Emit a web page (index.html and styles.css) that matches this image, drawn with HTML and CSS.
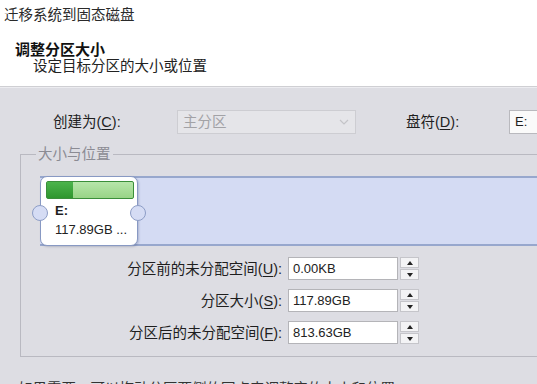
FILE: index.html
```html
<!doctype html>
<html lang="zh-CN">
  <head>
    <meta charset="utf-8">
    <title>迁移系统到固态磁盘</title>
    <link rel="stylesheet" href="styles.css">
  </head>
  <body>
    <header class="head">
      <div class="caption">迁移系统到固态磁盘</div>
      <div class="step-title">调整分区大小</div>
      <div class="step-desc">设定目标分区的大小或位置</div>
    </header>

    <main class="page">
      <div class="type-row">
        <label class="lbl lbl-type">创建为(<u>C</u>):</label>
        <div class="combo combo-off">
          <span>主分区</span>
          <svg class="chev" width="10" height="6" viewBox="0 0 10 6"><polyline points="1,1 5,5 9,1" fill="none" stroke="#c4c4c8" stroke-width="1.2"/></svg>
        </div>
        <label class="lbl lbl-drive">盘符(<u>D</u>):</label>
        <div class="combo combo-drive"><span>E:</span></div>
      </div>

      <fieldset class="group">
        <legend>大小与位置</legend>

        <div class="disk-map">
          <div class="part">
            <div class="usage"><span class="used" style="width:26px"></span></div>
            <div class="part-name">E:</div>
            <div class="part-size">117.89GB ...</div>
            <span class="grip grip-l"></span>
            <span class="grip grip-r"></span>
          </div>
        </div>

        <div class="sizes">
          <label class="lbl">分区前的未分配空间(<u>U</u>):</label>
          <div class="field">0.00KB</div>
          <div class="spin"><span class="spin-btn up"></span><span class="spin-btn down"></span></div>

          <label class="lbl">分区大小(<u>S</u>):</label>
          <div class="field">117.89GB</div>
          <div class="spin"><span class="spin-btn up"></span><span class="spin-btn down"></span></div>

          <label class="lbl">分区后的未分配空间(<u>F</u>):</label>
          <div class="field">813.63GB</div>
          <div class="spin"><span class="spin-btn up"></span><span class="spin-btn down"></span></div>
        </div>
      </fieldset>

      <p class="hint">如果需要，可以拖动分区两侧的圆点来调整它的大小和位置。</p>
    </main>
  </body>
</html>
```

FILE: styles.css
```css
html, body { margin: 0; padding: 0; overflow: hidden; height: 100%; }
body {
  font-family: "Liberation Sans", "Noto Sans CJK SC", sans-serif;
  font-size: 14.5px;
  line-height: 16px;
  color: #1e1e1e;
  background: #dddde3;
}

/* wizard header */
.head {
  background: #fff;
  height: 87px;
  border-bottom: 1px solid #cfcfd3;
  box-sizing: border-box;
  padding-top: 7px;
}
.caption { padding-left: 4px; color: #2a2a2a; }
.step-title { margin: 19px 0 0 15px; font-weight: bold; font-size: 15px; color: #111; }
.step-desc { margin-left: 33px; color: #222; }

.page {
  border-top: 1px solid #ececf0;
  padding-top: 22px;
}

/* first row */
.type-row { display: flex; align-items: center; height: 24px; }
.type-row > * { flex-shrink: 0; }
.lbl u { text-decoration: underline; text-underline-offset: 2px; }
.lbl-type { margin-left: 53px; width: 124px; }
.lbl-drive { margin-left: 50px; width: 103px; }
.combo {
  height: 24px;
  box-sizing: border-box;
  display: flex;
  align-items: center;
  padding-left: 5px;
}
.combo-off {
  width: 179px;
  background: #e5e5e9;
  border: 1px solid #cdcdd2;
  color: #a2a2a6;
  justify-content: space-between;
  padding-right: 6px;
}
.combo-drive {
  width: 60px;
  background: #fafafa;
  border: 1px solid #b9b9be;
  font-size: 13px;
}

/* group box */
.group {
  margin: 12px -40px 0 20px;
  padding: 14px 0 12px 0;
  border: 1px solid #b9b9c1;
  min-width: 0;
}
.group legend {
  margin-left: 15px;
  padding: 0 2px;
  color: #8b8b93;
}

/* disk map */
.disk-map {
  margin-left: 19px;
  height: 70px;
  box-sizing: border-box;
  background: #d4dbf3;
  border-top: 2px solid #97a7cd;
  border-bottom: 2px solid #97a7cd;
  display: flex;
}
.part {
  position: relative;
  margin: -2px 0;
  width: 98px;
  height: 70px;
  box-sizing: border-box;
  background: #fff;
  border: 1px solid #8899c3;
  border-radius: 7px;
  padding: 4px 3px 0 5px;
  box-shadow: 1px 1px 2px rgba(60, 70, 110, 0.25);
  font-size: 13px;
}
.usage {
  height: 18px;
  box-sizing: border-box;
  border: 1px solid #3a8f3a;
  border-radius: 2px;
  background: linear-gradient(#b7e6aa, #98d487);
  display: flex;
}
.used { background: linear-gradient(#4cb44c, #2f962f); }
.part-name { margin: 4px 0 0 9px; font-weight: bold; }
.part-size { margin: 3px 0 0 9px; color: #222; }
.grip {
  position: absolute;
  top: 28px;
  width: 16px;
  height: 16px;
  box-sizing: border-box;
  border-radius: 50%;
  background: #d5dcf4;
  border: 1px solid #8d9dc6;
}
.grip-l { left: -9px; }
.grip-r { right: -9px; }

/* size fields */
.sizes {
  margin-top: 11px;
  display: grid;
  grid-template-columns: 261px 110px 15px;
  column-gap: 6px;
  row-gap: 9px;
  align-items: center;
}
.sizes .lbl { justify-self: end; }
.sizes .spin { margin-left: -4px; }
.field {
  height: 23px;
  box-sizing: border-box;
  background: #fff;
  border: 1px solid #b4b4b8;
  font-size: 13px;
  padding: 0 4px;
  display: flex;
  align-items: center;
  color: #222;
}
.spin { display: flex; flex-direction: column; gap: 1px; }
.spin-btn {
  height: 11px;
  box-sizing: border-box;
  background: #f3f3f5;
  border: 1px solid #c5c5ca;
  display: flex;
  align-items: center;
  justify-content: center;
}
.spin-btn::after {
  content: "";
  border-left: 3px solid transparent;
  border-right: 3px solid transparent;
}
.up::after { border-bottom: 4px solid #222; }
.down::after { border-top: 4px solid #222; }

.hint {
  margin: 24px 0 0 18px;
  color: #333;
}
```
